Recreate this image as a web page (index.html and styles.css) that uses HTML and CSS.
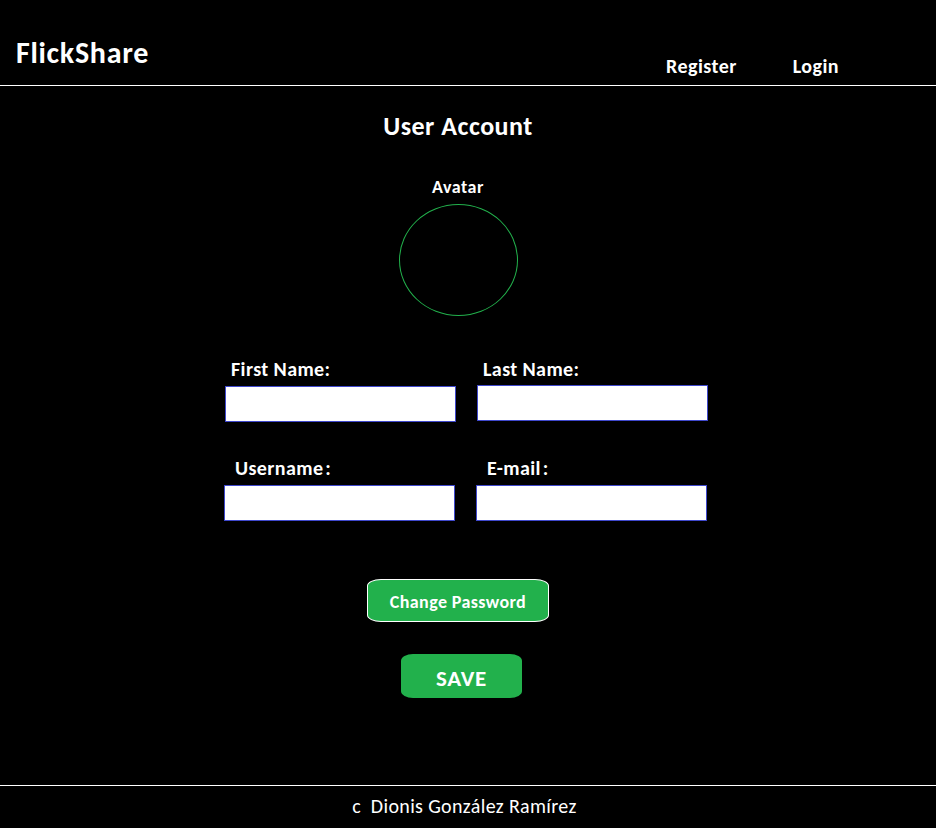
FILE: index.html
```html
<!DOCTYPE html>
<html lang="es">
<head>
<meta charset="utf-8">
<title>FlickShare - User Account</title>
<link rel="stylesheet" href="styles.css">
</head>
<body>
<header class="topbar">
  <div class="logo">FlickShare</div>
  <nav class="nav">
    <a class="nav-link" href="#">Register</a>
    <a class="nav-link" href="#">Login</a>
  </nav>
</header>
<main class="main">
  <h1 class="title">User Account</h1>
  <div class="avatar-label">Avatar</div>
  <div class="avatar"></div>
  <form class="form">
    <div class="field">
      <label class="label">First Name:</label>
      <input class="input" type="text">
    </div>
    <div class="field">
      <label class="label">Last Name:</label>
      <input class="input input-up" type="text">
    </div>
    <div class="field field-row2">
      <label class="label label-row2">Username<span class="colon">:</span></label>
      <input class="input input-left" type="text">
    </div>
    <div class="field field-row2">
      <label class="label label-row2">E-mail<span class="colon">:</span></label>
      <input class="input input-left" type="text">
    </div>
  </form>
  <button class="btn btn-change" type="button">Change Password</button>
  <button class="btn btn-save" type="button">SAVE</button>
</main>
<footer class="footer">c&nbsp; Dionis González Ramírez</footer>
</body>
</html>
```
FILE: styles.css
```css
* { box-sizing: border-box; }
html, body { margin: 0; padding: 0; background: #000; }
body {
  width: 936px;
  height: 828px;
  overflow: hidden;
  color: #fff;
  font-family: "Carlito", "Lato", "Noto Sans", sans-serif;
}
.topbar {
  height: 86px;
  border-bottom: 1px solid #fff;
  display: flex;
  align-items: flex-start;
  justify-content: space-between;
}
.logo {
  font-size: 30px;
  font-weight: 700;
  line-height: 36px;
  letter-spacing: 0.7px;
  margin: 35px 0 0 16px;
}
.nav {
  display: flex;
  margin: 54px 97px 0 0;
  gap: 56px;
}
.nav-link {
  color: #fff;
  text-decoration: none;
  font-size: 20px;
  font-weight: 700;
  line-height: 24px;
  letter-spacing: 0.45px;
}
.main {
  height: 699px;
  display: flex;
  flex-direction: column;
  align-items: center;
  padding-right: 20px;
}
.title {
  margin: 24px 0 0;
  font-size: 26px;
  line-height: 32px;
  font-weight: 700;
  letter-spacing: 0.5px;
}
.avatar-label {
  margin-top: 34px;
  font-size: 18px;
  line-height: 22px;
  font-weight: 700;
  letter-spacing: 0.5px;
}
.avatar {
  margin-top: 6px;
  width: 119px;
  height: 112px;
  border: 1px solid #22b14c;
  border-radius: 50%;
}
.form {
  margin: 41px 0 0 17px;
  display: grid;
  grid-template-columns: 231px 231px;
  column-gap: 21px;
}
.field { display: flex; flex-direction: column; }
.field-row2 { margin-top: 34px; }
.label {
  font-size: 20px;
  font-weight: 700;
  line-height: 24px;
  letter-spacing: 0.4px;
  margin: 0 0 5px 6px;
}
.label-row2 { margin: 0 0 5px 10px; }
.colon { margin-left: 2px; }
.input {
  width: 231px;
  height: 36px;
  border: 1px solid #3f48cc;
  background: #fff;
  margin: 0;
  padding: 0;
  outline: none;
}
.input-up { margin-top: -1px; }
.input-left { margin-left: -1px; }
.btn {
  font-family: inherit;
  font-weight: 700;
  color: #fff;
  background: #22b14c;
  cursor: pointer;
  padding: 0;
}
.btn-change {
  margin-top: 58px;
  width: 182px;
  height: 43px;
  border: 1px solid #fff;
  border-radius: 14px / 7px;
  font-size: 18px;
  line-height: 22px;
  letter-spacing: 0.4px;
  padding-top: 2px;
}
.btn-save {
  margin-top: 32px;
  margin-left: 7px;
  width: 121px;
  height: 44px;
  border: none;
  border-radius: 12px / 7px;
  font-size: 23px;
  line-height: 28px;
  letter-spacing: 0.7px;
  padding-top: 3px;
}
.footer {
  border-top: 1px solid #fff;
  height: 43px;
  text-align: center;
  font-size: 20px;
  line-height: 24px;
  letter-spacing: 0.35px;
  padding-top: 8px;
  padding-right: 7px;
}
```
